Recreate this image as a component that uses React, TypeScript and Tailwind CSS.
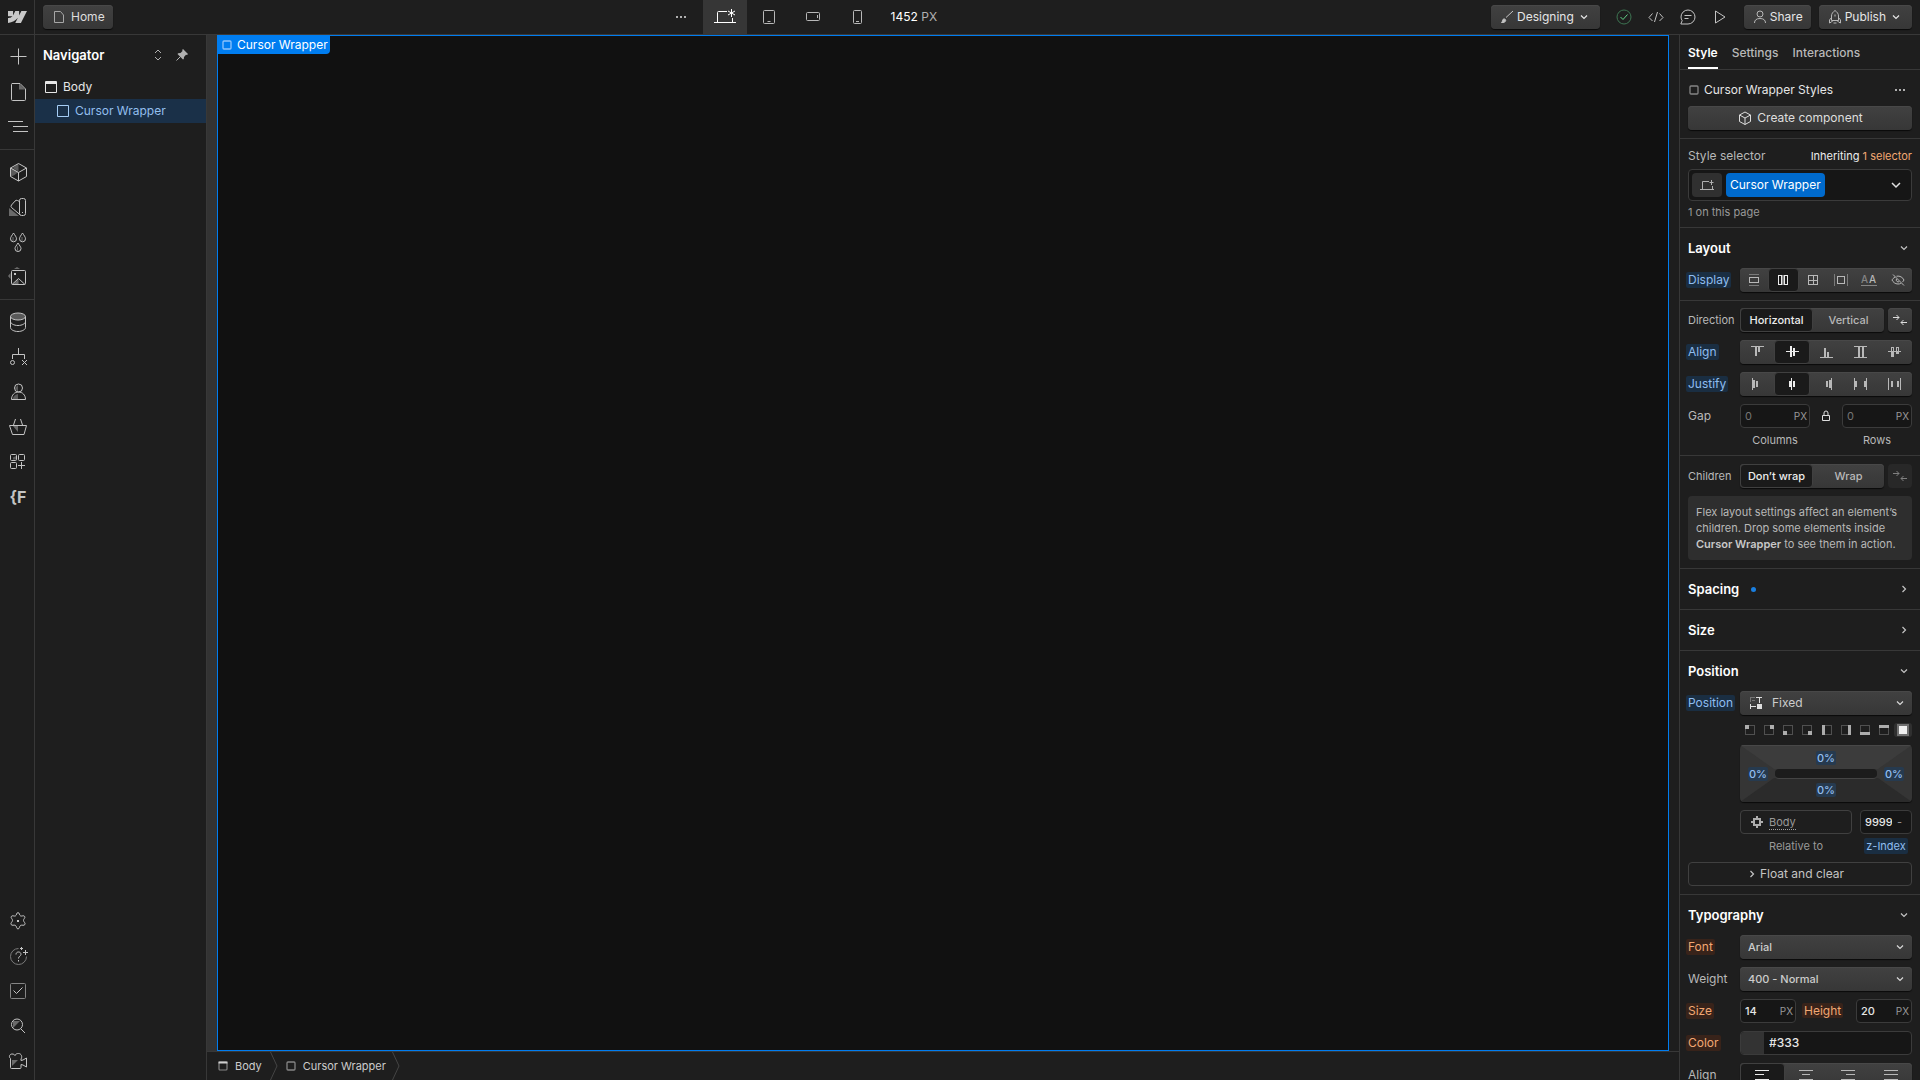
import type {ReactNode} from "react";
import clsx from "clsx";

type IconProps = {
  w?: number;
  h?: number;
  crisp?: boolean;
  className?: string;
  children: ReactNode;
};

function Icon({w = 20, h = 20, crisp, className, children}: IconProps) {
  return (
    <svg
      width={w}
      height={h}
      viewBox={`0 0 ${w} ${h}`}
      fill="none"
      stroke="currentColor"
      shapeRendering={crisp ? "crispEdges" : undefined}
      aria-hidden="true"
      className={clsx("shrink-0", className)}
    >
      {children}
    </svg>
  );
}

const raised =
  "rounded-[4px] bg-linear-to-b from-[#414141] to-[#373737] shadow-[0_1px_1px_#000000b3,inset_0_1px_0_#484848]";
const field = "rounded-[4px] border border-[#3b3b3b] bg-[#161616]";

function ChevronDown({className}: {className?: string}) {
  return (
    <Icon w={8} h={8} className={className}>
      <path d="M1 2.5 4 5.5 7 2.5" strokeWidth="1.2" />
    </Icon>
  );
}

function ChevronRight() {
  return (
    <Icon w={8} h={8}>
      <path d="M2.5 1 5.5 4 2.5 7" strokeWidth="1.2" />
    </Icon>
  );
}

function Dots() {
  return (
    <Icon w={12} h={4}>
      <path d="M1 1h2v2H1zM5 1h2v2H5zM9 1h2v2H9z" fill="currentColor" stroke="none" />
    </Icon>
  );
}

function BoxIcon() {
  return (
    <Icon w={10} h={10} className="text-[#858585]">
      <rect x="1" y="1" width="8" height="8" rx="1" strokeWidth="1.3" />
    </Icon>
  );
}

function ConvergeIcon() {
  return (
    <Icon w={16} h={12}>
      <path d="M1 3.5h6M4.5 1 7 3.5 4.5 6M15 8.5H9M11.5 6 9 8.5l2.5 2.5" />
    </Icon>
  );
}

const railGroups = [
  [
    {
      name: "Add",
      icon: <path d="M10.5 1.5v16M2.5 9.5h16" />,
    },
    {
      name: "Pages",
      icon: (
        <>
          <path d="M11 1.5v6h6z" fill="#6a6a6a" stroke="none" />
          <path d="M4 1.5h8L17.5 7v10.5a1 1 0 0 1-1 1h-12a1 1 0 0 1-1-1v-15a1 1 0 0 1 1-1z" />
        </>
      ),
    },
    {
      name: "Navigator",
      icon: <path d="M0 4.5h15M5 9.5h15M5 14.5h15" />,
    },
  ],
  [
    {
      name: "Components",
      icon: (
        <>
          <path d="m2.5 5.5 8 4.5-4 3-4 2zM10.5 1.5v8l-6-3.5z" fill="#5a5a5a" stroke="none" />
          <path d="m10.5 1.5 8 4.5v8.5l-8 4.5-8-4.5V6zM2.5 6l8 4.5 8-4.5M10.5 10.5V19" />
        </>
      ),
    },
    {
      name: "Variables",
      icon: (
        <>
          <path d="M1 11v8h10z" fill="#6a6a6a" stroke="none" />
          <rect x="11.5" y="1.5" width="6" height="17" rx="2" />
          <path d="m11.500 4.500-2-1a2 2 0 0 0-2.500.6L3.500 8a2 2 0 0 0 .2 2.700l8.300 7" />
          <path d="M14 15h1v1h-1z" fill="currentColor" stroke="none" />
        </>
      ),
    },
    {
      name: "Style selectors",
      icon: (
        <>
          <path d="M5.500 1c1.500 2.500 3 4 3 5.800a3 3 0 0 1-6 0C2.500 5 4 3.500 5.500 1zM14.500 1c1.500 2.500 3 4 3 5.800a3 3 0 0 1-6 0c0-1.800 1.500-3.300 3-5.800zM10 11c1.500 2.500 3 4 3 5.500a3 3 0 0 1-6 0c0-1.500 1.500-3 3-5.500z" />
          <path d="M5 5v4M14 5v4M9.500 14.500v4" stroke="#6a6a6a" />
        </>
      ),
    },
    {
      name: "Assets",
      icon: (
        <>
          <path d="M6 2h6L9 0zM2.500 6v6L0 9z" fill="#6a6a6a" stroke="none" />
          <path d="M10.500 12v5.500H5z" fill="#6a6a6a" stroke="none" />
          <rect x="3.5" y="3.5" width="14" height="14" rx="1" />
          <path d="m4 17.500 6.500-6 6.500 6" />
          <path d="M6 6h2v2H6z" fill="currentColor" stroke="none" />
        </>
      ),
    },
  ],
  [
    {
      name: "CMS",
      icon: (
        <>
          <ellipse cx="10" cy="4.5" rx="7.5" ry="3.5" fill="#5a5a5a" />
          <path d="M2.500 4.500v11c0 2 3.300 4 7.500 4s7.500-2 7.500-4v-11M2.500 9.500c0 2 3.300 4 7.500 4s7.500-2 7.500-4" />
        </>
      ),
    },
    {
      name: "Logic",
      icon: (
        <>
          <path d="M10.500 1v6M4.500 12V7.500h12V12" />
          <circle cx="4.5" cy="15.5" r="2" />
          <path d="m14 13 5 5M19 13l-5 5" />
        </>
      ),
    },
    {
      name: "Users",
      icon: (
        <>
          <path d="M4.500 17c1-3 3-4.500 5.500-5v5.500zM10 3v7L7 6z" fill="#5a5a5a" stroke="none" />
          <circle cx="10.5" cy="6" r="4" />
          <path d="M3.500 17.500c0-4.500 3-7.500 7-7.500s7 3 7 7.500z" />
        </>
      ),
    },
    {
      name: "Ecommerce",
      icon: (
        <>
          <path d="M5 9h5v6z" fill="#6a6a6a" stroke="none" />
          <path d="M1.500 8.500h17l-2.500 9H4.500zM5.500 8 7.500 2M14.500 8l-2-6" />
        </>
      ),
    },
    {
      name: "Apps",
      icon: (
        <>
          <path d="M5 5.500v2h4v-4z" fill="#5a5a5a" stroke="none" />
          <rect x="2.5" y="2.5" width="6" height="6" rx="1" />
          <rect x="10.5" y="2.5" width="6" height="6" rx="1" />
          <rect x="2.5" y="10.5" width="6" height="6" rx="1" />
          <path d="M13.500 10v7M10 13.500h7" />
        </>
      ),
    },
  ],
];

const railBottom = [
  {
    name: "Settings",
    icon: (
      <>
        <path d="M10 1.500c1.500 0 1.300 3 2.700 3.500 1.400.4 3-1 4 .5.800 1.500-1.400 2.500-1.200 4 .1 1.500 2.200 2.300 1.400 4-1 1.500-2.800.2-4.200.8-1.300.6-1.200 3.700-2.700 3.700s-1.400-3.100-2.700-3.700c-1.400-.6-3.200.7-4.200-.8-.8-1.700 1.300-2.500 1.400-4 .2-1.500-2-2.500-1.200-4 1-1.500 2.600-.1 4-.5C8.700 4.500 8.500 1.500 10 1.500z" />
        <path d="M9 9h2v2H9z" fill="currentColor" stroke="none" />
      </>
    ),
  },
  {
    name: "Help",
    icon: (
      <>
        <path d="M10.500 2.500a8 8 0 1 0 8 8" stroke="#7a7a7a" />
        <path d="M8 8.500c0-1.500 1-2.500 2.500-2.500S13 7 13 8.300c0 1.700-2.500 1.900-2.500 4.200M10.500 14v1.500M17.500 4v5M15 6.500h5M13.500 1v3M12 2.500h3" />
      </>
    ),
  },
  {
    name: "Audit",
    icon: (
      <>
        <rect x="2.5" y="2.5" width="15" height="15" rx="1" stroke="#858585" />
        <path d="m5.500 9.500 3 3 6-6" />
      </>
    ),
  },
  {
    name: "Search",
    icon: (
      <>
        <path d="M5 12V5h7z" fill="#6a6a6a" stroke="none" />
        <circle cx="9" cy="8.5" r="5.5" />
        <path d="m13 13 4 4" />
      </>
    ),
  },
  {
    name: "Video tutorials",
    icon: (
      <>
        <path d="M4 9v6l6-6z" fill="#6a6a6a" stroke="none" />
        <path d="M2.500 9V7.500C.5 6 1.500 3 4 3c1.500 0 2.500.5 3 1.500C7.500 3 9 2.500 10.500 2.500c3 0 4 3.500 2.500 5.500v1.500l2-.5 3.500-2v9l-3.500-2-2-.5v3a1 1 0 0 1-1 1H3.500a1 1 0 0 1-1-1V9" />
      </>
    ),
  },
];

function RailButton({name, children}: {name: string; children: ReactNode}) {
  return (
    <button aria-label={name} className="flex h-[35px] w-9 items-center justify-center">
      {children}
    </button>
  );
}

function Rail() {
  return (
    <nav className="flex w-[35px] shrink-0 flex-col justify-between border-r border-[#383838] pb-[2px] text-[#c4c4c4]">
      <div>
        {railGroups.map((group, i) => (
          <div
            key={i}
            className={clsx("pt-1", i < 2 && "border-b border-[#383838] pb-[5px]")}
          >
            {group.map((item) => (
              <RailButton key={item.name} name={item.name}>
                <Icon>{item.icon}</Icon>
              </RailButton>
            ))}
            {i === 2 && (
              <RailButton name="Finsweet">
                <span className="text-base font-bold">{"{F"}</span>
              </RailButton>
            )}
          </div>
        ))}
      </div>
      <div>
        {railBottom.map((item) => (
          <RailButton key={item.name} name={item.name}>
            <Icon>{item.icon}</Icon>
          </RailButton>
        ))}
      </div>
    </nav>
  );
}

const devices = [
  {
    name: "Desktop",
    w: 24,
    icon: (
      <>
        <path d="M1 14.500h22M4.500 14V4.500a1 1 0 0 1 1-1H14M19.500 10v4" />
        <path d="M18.500 1v8M15 3l7 4M22 3l-7 4" />
      </>
    ),
  },
  {
    name: "Tablet",
    w: 14,
    icon: (
      <>
        <rect x="1.5" y="2.5" width="11" height="13" rx="1" />
        <path d="M5.500 13.500h3" />
      </>
    ),
  },
  {
    name: "Mobile landscape",
    w: 16,
    icon: (
      <>
        <rect x="1.5" y="4.5" width="13" height="8" rx="1" />
        <path d="M12.500 7v3" />
      </>
    ),
  },
  {
    name: "Mobile portrait",
    w: 10,
    icon: (
      <>
        <rect x="1.5" y="2.5" width="8" height="13" rx="1" />
        <path d="M4 13.500h3" />
      </>
    ),
  },
];

function TopBar() {
  return (
    <header className="flex h-[35px] shrink-0 border-b border-[#383838]">
      <a
        href="#"
        aria-label="Dashboard"
        className="flex w-[35px] shrink-0 items-center justify-center border-r border-[#383838] text-[#c8c8c8]"
      >
        <svg width="19" height="12" viewBox="0 4.5 24 15" fill="currentColor" aria-hidden="true">
          <path d="m24 4.515-7.658 14.970H9.149l3.205-6.204h-.144C9.566 16.713 5.621 18.973 0 19.485v-6.118s3.596-.213 5.710-2.435H0V4.515h6.417v5.278l.144-.001 2.622-5.277h4.854v5.244h.144l2.720-5.244H24Z" />
        </svg>
      </a>
      <div className="flex min-w-0 grow items-center justify-between px-2">
        <button className={clsx("flex h-6 items-center gap-1 px-2 text-[#dedede]", raised)}>
          <Icon w={16} h={16} className="text-[#a6a6a6]">
            <path d="M3.500 2.500h6L12.500 6v7.500h-9z" />
          </Icon>
          Home
        </button>

        <div className="flex h-[34px] items-center">
          <button
            aria-label="More breakpoints"
            className="flex h-full w-11 items-center justify-center text-[#b0b0b0]"
          >
            <Dots />
          </button>
          {devices.map((d, i) => (
            <button
              key={d.name}
              aria-label={d.name}
              className={clsx(
                "flex h-full w-11 items-center justify-center",
                i === 0 ? "bg-[#363636] text-white" : "text-[#b8b8b8]",
              )}
            >
              <Icon w={d.w} h={18}>
                {d.icon}
              </Icon>
            </button>
          ))}
          <span className="pr-2 pl-3 text-[#b0b0b0]">
            <span className="text-white">1452</span> PX
          </span>
        </div>

        <div className="flex items-center text-[#c4c4c4]">
          <button className={clsx("flex h-6 items-center gap-[2px] px-2 text-[#e6e6e6]", raised)}>
            <Icon w={16} h={16} className="text-[#c4c4c4]">
              <path d="M14 2 7 8.500M2.500 13.500c2 .2 4-.3 4.200-2 .1-1-1-1.900-2-1.500-1.700.5-.7 2.500-2.200 3.500z" fill="currentColor" />
            </Icon>
            Designing
            <span className="flex w-4 justify-center">
              <ChevronDown />
            </span>
          </button>
          <button aria-label="Changes saved" className="ml-2 flex w-8 justify-center">
            <Icon w={16} h={16} className="text-[#63d489]">
              <circle cx="8" cy="8" r="7" stroke="#3d7552" />
              <path d="m4.500 8 2.500 2.500 4.500-5" />
            </Icon>
          </button>
          <button aria-label="Export code" className="flex w-8 justify-center">
            <Icon w={16} h={16}>
              <path d="m4.500 4.500-3.500 4 3.500 3.500M11.500 4.500l3.500 4-3.500 3.500M9.500 3l-3 10" />
            </Icon>
          </button>
          <button aria-label="Comments" className="flex w-8 justify-center">
            <Icon w={16} h={16}>
              <path d="M.8 15h7.200a7 7 0 1 0-7-7c0 1.500.5 2.600 1.200 3.600zM4.500 6.500h7M4.500 9.500h4" />
            </Icon>
          </button>
          <button aria-label="Preview" className="flex w-8 justify-center">
            <Icon w={14} h={16}>
              <path d="M2.500 2v12l9.500-6z" />
            </Icon>
          </button>
          <button className={clsx("ml-2 flex h-6 items-center gap-[2px] px-2 text-[#e6e6e6]", raised)}>
            <Icon w={16} h={16} className="text-[#b8b8b8]">
              <circle cx="8" cy="5" r="3" />
              <path d="M2.500 14c0-3 2-4.500 5.500-4.500s5.500 1.500 5.500 4.500" />
            </Icon>
            Share
          </button>
          <button className={clsx("ml-2 flex h-6 items-center gap-[2px] px-2 text-[#e6e6e6]", raised)}>
            <Icon w={16} h={16} className="text-[#b8b8b8]">
              <path d="M4.500 11.500V7C4.500 4.500 6 3 8 1.500 10 3 11.500 4.500 11.500 7v4.500zM4.500 8.500 2.500 11v3l2-1 1.500-1.500M11.500 8.500l2 2.500v3l-2-1-1.500-1.500M8 5.500v2M6.500 14h3" />
            </Icon>
            Publish
            <span className="flex w-4 justify-center">
              <ChevronDown />
            </span>
          </button>
        </div>
      </div>
    </header>
  );
}

function Navigator() {
  return (
    <aside className="w-[172px] shrink-0 border-r border-[#383838]">
      <div className="flex h-10 items-center pr-3 pl-2">
        <h2 className="grow text-[13px] font-semibold text-white">Navigator</h2>
        <button aria-label="Collapse all" className="flex w-6 justify-center text-[#b0b0b0]">
          <Icon w={8} h={12}>
            <path d="M1 4 4 1l3 3M1 8l3 3 3-3" />
          </Icon>
        </button>
        <button aria-label="Pin panel" className="flex w-6 justify-center text-[#b0b0b0]">
          <Icon w={12} h={12}>
            <path d="m7 0 5 5-1 1-1-.3L8 8l-.2 2-.8.500L1.500 5l.7-.8L4.500 4l2-2-.3-1z" fill="currentColor" stroke="none" />
            <path d="M4.500 7.500.5 11.500" />
          </Icon>
        </button>
      </div>
      <ul>
        <li className="flex h-6 items-center gap-[6px] pl-[10px] text-[#e6e6e6]">
          <Icon w={12} h={12}>
            <path d="M.5.500h11v11H.5zM.5 2.500h11M.5 1.500h11" />
          </Icon>
          Body
        </li>
        <li className="flex h-6 items-center gap-[6px] bg-[#1a3048] pl-[22px] text-[#93bfee]">
          <Icon w={12} h={12} className="text-[#a5cdf5]">
            <path d="M.5.500h11v11H.5z" />
          </Icon>
          Cursor Wrapper
        </li>
      </ul>
    </aside>
  );
}

function CrumbSeparator() {
  return (
    <Icon w={8} h={28} className="text-[#454545]">
      <path d="M.5 0 7 14 .5 28" />
    </Icon>
  );
}

function Canvas() {
  return (
    <main className="flex min-w-0 grow flex-col">
      <div className="flex grow bg-[#1e1e1e]">
        <div className="w-[10px] shrink-0 bg-[#333333]" />
        <div className="grow border border-[#007df0] bg-[#111111]">
          <div className="flex h-[18px] w-fit items-center gap-[5px] rounded-br-[4px] bg-[#007df0] pr-[2px] pl-1 leading-[14px] text-white">
            <Icon w={10} h={10} className="text-[#8fc4fa]">
              <rect x="1" y="1" width="8" height="8" rx="1" strokeWidth="1.3" />
            </Icon>
            Cursor Wrapper
          </div>
        </div>
        <div className="w-[10px] shrink-0" />
      </div>
      <div className="flex h-[29px] shrink-0 items-center border-t border-[#383838] pl-[11px] text-[11px] text-[#cccccc]">
        <Icon w={10} h={10} className="text-[#858585]">
          <rect x="1" y="1" width="8" height="8" rx="1" strokeWidth="1.2" />
          <path d="M.5 1.500h9" stroke="#d0d0d0" strokeWidth="2" />
        </Icon>
        <span className="mr-2 ml-[7px]">Body</span>
        <CrumbSeparator />
        <span className="ml-2 flex items-center gap-[7px] pr-[6px]">
          <BoxIcon />
          Cursor Wrapper
        </span>
        <CrumbSeparator />
      </div>
    </main>
  );
}

type Tone = "plain" | "blue" | "orange";

const tones: Record<Tone, string> = {
  plain: "text-[#b8b8b8]",
  blue: "bg-[#1a2e42] text-[#8fbdf0]",
  orange: "bg-[#38231a] text-[#f2a873]",
};

type LabelProps = {tone?: Tone; small?: boolean; htmlFor?: string; children: ReactNode};

function Label({tone = "plain", small, htmlFor, children}: LabelProps) {
  const cls = clsx(
    "-ml-[2px] rounded-[2px] px-[2px] leading-4 whitespace-nowrap",
    small && "text-[11px]",
    tones[tone],
  );
  return htmlFor ? (
    <label htmlFor={htmlFor} className={cls}>
      {children}
    </label>
  ) : (
    <span className={cls}>{children}</span>
  );
}

type RowProps = LabelProps & {label: string};

function Row({label, tone, small, htmlFor, children}: RowProps) {
  return (
    <div className="flex h-6 items-center">
      <div className="flex w-[52px] shrink-0">
        <Label tone={tone} small={small} htmlFor={htmlFor}>
          {label}
        </Label>
      </div>
      {children}
    </div>
  );
}

type Option = {name: string; icon?: ReactNode; smooth?: boolean};

function Segmented({label, options, active}: {label: string; options: Option[]; active: number}) {
  return (
    <div role="group" aria-label={label} className={clsx("flex h-6 min-w-0 grow", raised)}>
      {options.map((o, i) => (
        <button
          key={o.name}
          aria-label={o.name}
          aria-pressed={i === active}
          className={clsx(
            "flex flex-1 items-center justify-center rounded-[4px] text-[11px] font-medium",
            i === active
              ? "border border-[#404040] bg-[#1a1a1a] text-[#ececec]"
              : "text-[#b8b8b8]",
          )}
        >
          {o.icon ? (
            <Icon w={16} h={14} crisp={!o.smooth}>
              {o.icon}
            </Icon>
          ) : (
            o.name
          )}
        </button>
      ))}
    </div>
  );
}

const displayOptions: Option[] = [
  {
    name: "Block",
    icon: (
      <>
        <path d="M3 1.500h10M3 12.500h10" stroke="#7a7a7a" />
        <path d="M3.500 4.500h9v5h-9z" />
      </>
    ),
  },
  {
    name: "Flex",
    icon: (
      <>
        <path d="M6 2h4v10H6z" fill="#858585" stroke="none" />
        <path d="M3.500 2.500h3v9h-3zM9.500 2.500h3v9h-3z" />
      </>
    ),
  },
  {
    name: "Grid",
    icon: <path d="M3.500 2.500h9v9h-9zM8.500 2.500v9M3.500 7.500h9" />,
  },
  {
    name: "Inline-block",
    icon: (
      <>
        <path d="M1.500 1v12M14.500 1v12" stroke="#7a7a7a" />
        <path d="M4.500 3.500h7v7h-7z" />
      </>
    ),
  },
  {
    name: "Inline",
    smooth: true,
    icon: (
      <>
        <text x="0" y="10" fontSize="10" fill="#858585" stroke="none">A</text>
        <text x="8" y="10" fontSize="10" fill="currentColor" stroke="none">A</text>
        <path d="M0 12.500h16" stroke="#858585" />
      </>
    ),
  },
  {
    name: "None",
    smooth: true,
    icon: (
      <path d="m3 1.500 11 11M5 4C3.500 5 2.500 6 2 7c1 2 3 4 6 4 1 0 2-.2 2.800-.6M6.500 3.200C10 2.500 12.800 4.500 14 7c-.4.800-1 1.500-1.600 2.100M6.500 6a2 2 0 0 0 2.700 2.700" />
    ),
  },
];

const alignOptions: Option[] = [
  {
    name: "Start",
    icon: (
      <>
        <path d="M2 1.500h13" />
        <path d="M7 2v9M10 2v5" strokeWidth="2" />
      </>
    ),
  },
  {
    name: "Center",
    icon: (
      <>
        <path d="M2 6.500h13" />
        <path d="M7 1v11M10 3v8" strokeWidth="2" />
      </>
    ),
  },
  {
    name: "End",
    icon: (
      <>
        <path d="M1 12.500h13" />
        <path d="M6 3v9M9 7v5" strokeWidth="2" />
      </>
    ),
  },
  {
    name: "Stretch",
    icon: (
      <>
        <path d="M1 1.500h13M1 12.500h13" />
        <path d="M6 2v10M10 2v10" strokeWidth="2" />
      </>
    ),
  },
  {
    name: "Baseline",
    icon: (
      <>
        <path d="M1 6.500h13M4.500 6V2.500h2V6M9.500 6V2.500h2V6" />
        <path d="M4 6h3v6H4zM9 6h3v3H9z" fill="currentColor" stroke="none" />
      </>
    ),
  },
];

const justifyOptions: Option[] = [
  {
    name: "Start",
    icon: (
      <>
        <path d="M3.500 1v12" />
        <path d="M5 3v8M8 4v6" strokeWidth="2" />
      </>
    ),
  },
  {
    name: "Center",
    icon: (
      <>
        <path d="M7.500 1v12" />
        <path d="M6 4v6M10 4v6" strokeWidth="2" />
      </>
    ),
  },
  {
    name: "End",
    icon: (
      <>
        <path d="M12.500 1v12" />
        <path d="M8 4v6M11 3v8" strokeWidth="2" />
      </>
    ),
  },
  {
    name: "Space between",
    icon: (
      <>
        <path d="M1.500 1v12M13.500 1v12" />
        <path d="M3 4v6M12 4v6" strokeWidth="2" />
      </>
    ),
  },
  {
    name: "Space around",
    icon: (
      <>
        <path d="M1.500 1v12M13.500 1v12" />
        <path d="M5 4v6M11 4v6" strokeWidth="2" />
      </>
    ),
  },
];

const textAlignOptions: Option[] = [
  {name: "Left", icon: <path d="M1 2.500h14M1 6.500h9M1 11.500h14" />},
  {name: "Center", icon: <path d="M1 2.500h14M4 6.500h8M1 11.500h14" />},
  {name: "Right", icon: <path d="M1 2.500h14M6 6.500h9M1 11.500h14" />},
  {name: "Justify", icon: <path d="M1 2.500h14M1 6.500h14M1 11.500h14" />},
];

const presets = [
  {name: "Top left", d: "M0 0h4v4H0z"},
  {name: "Top right", d: "M6 0h4v4H6z"},
  {name: "Bottom left", d: "M0 6h4v4H0z"},
  {name: "Bottom right", d: "M6 6h4v4H6z"},
  {name: "Left", d: "M0 0h3v10H0z"},
  {name: "Right", d: "M7 0h3v10H7z"},
  {name: "Bottom", d: "M0 7h10v3H0z"},
  {name: "Top", d: "M0 0h10v3H0z"},
];

type SectionProps = {title: string; open?: boolean; dot?: boolean; children?: ReactNode};

function Section({title, open, dot, children}: SectionProps) {
  return (
    <section className={clsx("border-b border-[#383838]", open && "pb-2")}>
      <button
        aria-expanded={!!open}
        className="flex h-10 w-full items-center justify-between px-2"
      >
        <span className="flex items-center gap-3 text-[13px] font-semibold text-white">
          {title}
          {dot && <span className="size-[5px] rounded-full bg-[#1a7fe0]" />}
        </span>
        <span className="flex w-4 justify-center text-[#c4c4c4]">
          {open ? <ChevronDown /> : <ChevronRight />}
        </span>
      </button>
      {children}
    </section>
  );
}

type UnitProps = {id: string; value?: string; placeholder?: string; className?: string};

function UnitInput({id, value, placeholder, className}: UnitProps) {
  return (
    <div className={clsx("flex h-6 shrink-0 items-center pr-[2px] pl-1 text-[11px]", field, className)}>
      <input
        id={id}
        defaultValue={value}
        placeholder={placeholder}
        className="w-0 min-w-0 grow font-medium text-[#e6e6e6] outline-none placeholder:font-normal placeholder:text-[#757575]"
      />
      <span className="text-[10px] text-[#999999]">PX</span>
    </div>
  );
}

function Select({id, value, icon}: {id: string; value: string; icon?: ReactNode}) {
  return (
    <div className={clsx("flex h-6 min-w-0 grow items-center pr-2", raised)}>
      {icon}
      <select
        id={id}
        defaultValue={value}
        className={clsx(
          "h-6 min-w-0 grow appearance-none text-[#cccccc] outline-none",
          icon ? "pl-[10px]" : "pl-2 text-[11px] font-medium",
        )}
      >
        <option>{value}</option>
      </select>
      <ChevronDown className="text-[#d9d9d9]" />
    </div>
  );
}

function Offset() {
  return (
    <button className="w-5 rounded-[2px] bg-[#263a4f] text-center text-[11px] leading-[14px] font-medium text-[#93bff0]">
      0%
    </button>
  );
}

function StylePanel() {
  return (
    <aside className="w-[241px] shrink-0 overflow-hidden border-l border-[#383838]">
      <div role="tablist" className="flex h-[35px] gap-[14px] border-b border-[#383838] px-2 font-medium text-[#b8b8b8]">
        <button role="tab" aria-selected="true" className="border-b-2 border-white pt-1 font-semibold text-white">
          Style
        </button>
        <button role="tab" className="border-b-2 border-transparent pt-1">Settings</button>
        <button role="tab" className="border-b-2 border-transparent pt-1">Interactions</button>
      </div>

      <div className="border-b border-[#383838] px-2 pb-2">
        <div className="flex h-9 items-center pt-1 text-[#e6e6e6]">
          <span className="flex grow items-center gap-[5px] pl-[1px]">
            <BoxIcon />
            Cursor Wrapper Styles
          </span>
          <button aria-label="More options" className="mr-[6px] text-[#b0b0b0]">
            <Dots />
          </button>
        </div>
        <button className={clsx("flex h-6 w-full items-center justify-center gap-1 text-[#dedede]", raised)}>
          <Icon w={16} h={16}>
            <path d="m8 2 5.500 3v6.500L8 14.500l-5.500-3V5zM2.500 5 8 8l5.500-3M8 8v6.500" />
          </Icon>
          Create component
        </button>
      </div>

      <div className="border-b border-[#383838] px-2 pb-[7px]">
        <div className="flex h-[30px] items-center justify-between pt-1">
          <label htmlFor="selector" className="text-[#b8b8b8]">
            Style selector
          </label>
          <span className="text-[11px] text-[#ececec]">
            Inheriting <span className="text-[#f2a873]">1 selector</span>
          </span>
        </div>
        <div className={clsx("flex h-8 items-center gap-1 px-[3px]", field)}>
          <button
            aria-label="States"
            className="flex h-6 w-[30px] items-center justify-center rounded-[4px] bg-[#303030] text-[#b0b0b0]"
          >
            <Icon w={16} h={12}>
              <path d="M1 10.500h14M3.500 10V2.500H10M13.500 7v3M12.500 1v5M10.500 3.500h4" />
            </Icon>
          </button>
          <span className="flex h-6 shrink-0 items-center rounded-[4px] bg-[#006acc] px-1 text-white">
            Cursor Wrapper
          </span>
          <input id="selector" className="w-0 min-w-0 grow outline-none" />
          <button aria-label="Show selectors" className="mr-[6px] text-[#e0e0e0]">
            <Icon w={12} h={8}>
              <path d="m2 2 4 4 4-4" strokeWidth="1.5" />
            </Icon>
          </button>
        </div>
        <p className="pt-1 text-[11px] leading-[15px] text-[#999999]">1 on this page</p>
      </div>

      <Section title="Layout" open>
        <div className="px-2">
          <Row label="Display" tone="blue">
            <Segmented label="Display" options={displayOptions} active={1} />
          </Row>
        </div>
        <div className="mt-2 flex flex-col gap-2 border-t border-[#383838] px-2 pt-[7px]">
          <Row label="Direction" small>
            <Segmented label="Direction" options={[{name: "Horizontal"}, {name: "Vertical"}]} active={0} />
            <button
              aria-label="Reverse"
              className={clsx("ml-1 flex size-6 shrink-0 items-center justify-center text-[#dedede]", raised)}
            >
              <ConvergeIcon />
            </button>
          </Row>
          <Row label="Align" tone="blue">
            <Segmented label="Align" options={alignOptions} active={1} />
          </Row>
          <Row label="Justify" tone="blue">
            <Segmented label="Justify" options={justifyOptions} active={1} />
          </Row>
          <Row label="Gap">
            <UnitInput id="gap-columns" placeholder="0" className="w-[70px]" />
            <button aria-label="Lock gap" className="flex grow justify-center text-[#dedede]">
              <Icon w={10} h={12}>
                <path d="M1.500 5.500h7v5h-7zM3 5.500V3a2 2 0 0 1 4 0v2.500" />
              </Icon>
            </button>
            <UnitInput id="gap-rows" placeholder="0" className="w-[70px]" />
          </Row>
        </div>
        <div className="flex h-7 items-center justify-between border-b border-[#383838] pr-2 pl-[60px] text-[11px] text-[#b8b8b8]">
          <label htmlFor="gap-columns" className="w-[70px] pb-1 text-center">Columns</label>
          <label htmlFor="gap-rows" className="w-[70px] pb-1 text-center">Rows</label>
        </div>
        <div className="px-2 pt-2">
          <Row label="Children" small>
            <Segmented label="Children" options={[{name: "Don’t wrap"}, {name: "Wrap"}]} active={0} />
            <button
              aria-label="Reverse wrap"
              disabled
              className="ml-1 flex size-6 shrink-0 items-center justify-center rounded-[4px] bg-[#282828] text-[#808080]"
            >
              <ConvergeIcon />
            </button>
          </Row>
          <p className="mt-2 rounded-[4px] bg-[#2e2e2e] p-2 text-[11px] leading-4 text-[#b8b8b8]">
            Flex layout settings affect an element’s children. Drop some elements inside{" "}
            <strong className="font-semibold text-[#c8c8c8]">Cursor Wrapper</strong> to see them in action.
          </p>
        </div>
      </Section>

      <Section title="Spacing" dot />
      <Section title="Size" />

      <Section title="Position" open>
        <div className="px-2">
          <Row label="Position" tone="blue" htmlFor="position">
            <Select
              id="position"
              value="Fixed"
              icon={
                <Icon w={12} h={12} crisp className="ml-[10px] text-[#dedede]">
                  <path d="M.5 5V.500H5M2 3.500h3" stroke="#757575" />
                  <path d="M6 .500h6M9.500 0v6M.5 7v5M0 9.500h6" />
                  <path d="M7 7h5v5H7z" fill="currentColor" stroke="none" />
                </Icon>
              }
            />
          </Row>
          <div className="ml-[52px] flex h-[30px] items-center justify-between">
            {presets.map((p) => (
              <button key={p.name} aria-label={p.name} className="flex w-[19px] justify-center">
                <Icon w={10} h={10} crisp>
                  <path d="M.5.500h9v9h-9z" stroke="#505050" />
                  <path d={p.d} fill="#adadad" stroke="none" />
                </Icon>
              </button>
            ))}
            <button
              aria-label="Full"
              className="flex h-[14px] w-[18px] items-center justify-center rounded-[3px] bg-[#303030]"
            >
              <Icon w={12} h={12}>
                <path d="M1 1h10v10H1z" fill="#f0f0f0" stroke="#707070" strokeWidth="2" />
              </Icon>
            </button>
          </div>
          <div className="relative ml-[52px] h-[57px] overflow-hidden rounded-[4px] bg-[#353535] shadow-[0_1px_1px_#000000b3]">
            <svg viewBox="0 0 172 57" preserveAspectRatio="none" className="absolute inset-0 size-full" aria-hidden="true">
              <path d="M0 0h172l-34 24H34z" fill="#3c3c3c" />
              <path d="M0 57h172l-34-24H34z" fill="#2b2b2b" />
              <path d="M0 .5h172" stroke="#484848" />
            </svg>
            <div className="relative flex h-full items-center justify-between px-2">
              <Offset />
              <div className="flex w-[102px] flex-col items-center gap-1">
                <Offset />
                <div className="h-[10px] w-full rounded-[4px] border-b border-[#444444] bg-[#1c1c1c]" />
                <Offset />
              </div>
              <Offset />
            </div>
          </div>
          <div className="mt-2 ml-[52px] flex gap-2">
            <button className="flex h-6 min-w-0 grow items-center gap-[6px] rounded-[4px] border border-[#404040] pl-[10px] text-[11px] text-[#999999]">
              <Icon w={12} h={12} className="text-[#adadad]">
                <path d="M3 3h6v6H3zM6 0v3M6 9v3M0 6h3M9 6h3" strokeWidth="2" />
              </Icon>
              <span className="border-b border-dotted border-[#a0a0a0] leading-[14px]">Body</span>
            </button>
            <div className={clsx("flex h-6 w-[52px] shrink-0 items-center px-1 text-[11px]", field)}>
              <input
                id="z-index"
                defaultValue="9999"
                className="w-[27px] font-medium text-[#e6e6e6] outline-none"
              />
              <span className="grow text-center text-[#999999]">-</span>
            </div>
          </div>
          <div className="ml-[52px] flex h-7 gap-2 pt-1 text-[11px]">
            <span className="grow text-center leading-4 text-[#999999]">Relative to</span>
            <div className="flex w-[52px] shrink-0 justify-center">
              <label
                htmlFor="z-index"
                className="h-4 rounded-[2px] bg-[#1a2e42] px-[2px] leading-4 text-[#8fbdf0]"
              >
                z-Index
              </label>
            </div>
          </div>
          <button className="flex h-6 w-full items-center justify-center gap-1 rounded-[4px] border border-[#404040] pr-2 text-[#c4c4c4]">
            <ChevronRight />
            Float and clear
          </button>
        </div>
      </Section>

      <Section title="Typography" open>
        <div className="flex flex-col gap-2 px-2">
          <Row label="Font" tone="orange" htmlFor="font">
            <Select id="font" value="Arial" />
          </Row>
          <Row label="Weight" htmlFor="weight">
            <Select id="weight" value="400 - Normal" />
          </Row>
          <Row label="Size" tone="orange" htmlFor="size">
            <UnitInput id="size" value="14" className="w-14" />
            <div className="grow pl-2">
              <Label tone="orange" htmlFor="height">Height</Label>
            </div>
            <UnitInput id="height" value="20" className="w-14" />
          </Row>
          <Row label="Color" tone="orange" htmlFor="color">
            <div className={clsx("flex h-6 min-w-0 grow items-center overflow-hidden", field)}>
              <button aria-label="Pick color" className="h-6 w-[23px] shrink-0 bg-[#333333]" />
              <input
                id="color"
                defaultValue="#333"
                className="w-0 grow pl-[5px] text-[12px] font-medium text-[#e6e6e6] outline-none"
              />
            </div>
          </Row>
          <Row label="Align">
            <Segmented label="Text align" options={textAlignOptions} active={0} />
          </Row>
        </div>
      </Section>
    </aside>
  );
}

export default function App() {
  return (
    <div className="flex h-screen flex-col overflow-hidden bg-[#1e1e1e] font-['Inter','Liberation_Sans',sans-serif] text-[12px] leading-4">
      <TopBar />
      <div className="flex min-h-0 grow">
        <Rail />
        <Navigator />
        <Canvas />
        <StylePanel />
      </div>
    </div>
  );
}
